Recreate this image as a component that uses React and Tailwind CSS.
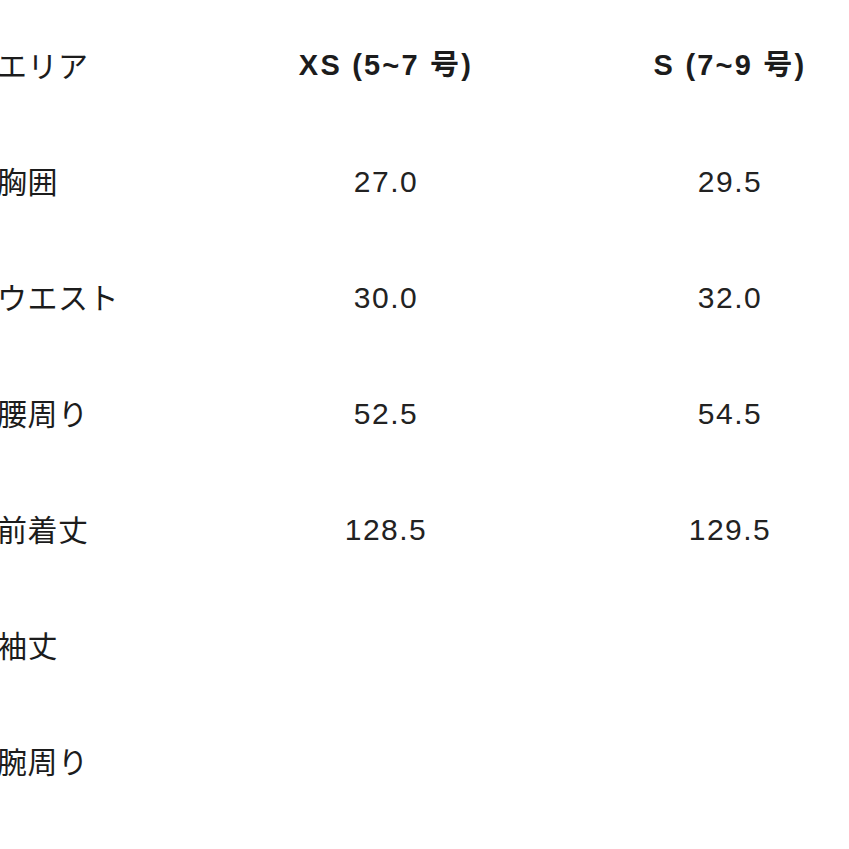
import React from "react";

const rows = [
  ["胸囲", "27.0", "29.5"],
  ["ウエスト", "30.0", "32.0"],
  ["腰周り", "52.5", "54.5"],
  ["前着丈", "128.5", "129.5"],
  ["袖丈", "", ""],
  ["腕周り", "", ""],
];

const jp = { fontFamily: '"Noto Sans CJK JP", sans-serif' };

export default function App() {
  return (
    <div
      className="w-[849px] h-[849px] bg-white overflow-hidden text-[#1c1c1c]"
      style={{ fontFamily: '"Liberation Sans", "Noto Sans CJK JP", sans-serif' }}
    >
      <div className="ml-[-3px] pt-[9px] grid grid-cols-[217px_344px_344px]">
        <div className="h-[116px] pb-[6px] flex items-center text-[30px] tracking-[0.5px]" style={jp}>エリア</div>
        <div className="h-[116px] pb-[2px] flex items-center justify-center text-[29px] font-bold tracking-[2.2px] whitespace-pre">XS (5~7 号)</div>
        <div className="h-[116px] pb-[2px] flex items-center justify-center text-[29px] font-bold tracking-[2.2px] whitespace-pre">S (7~9 号)</div>
        {rows.map(([label, a, b]) => (
          <React.Fragment key={label}>
            <div className="h-[116px] pb-[6px] flex items-center text-[30px] tracking-[0.5px]" style={jp}>{label}</div>
            <div className="h-[116px] pb-[4px] flex items-center justify-center text-[30px] tracking-[1.5px] text-[#222]">{a}</div>
            <div className="h-[116px] pb-[4px] flex items-center justify-center text-[30px] tracking-[1.5px] text-[#222]">{b}</div>
          </React.Fragment>
        ))}
      </div>
    </div>
  );
}
